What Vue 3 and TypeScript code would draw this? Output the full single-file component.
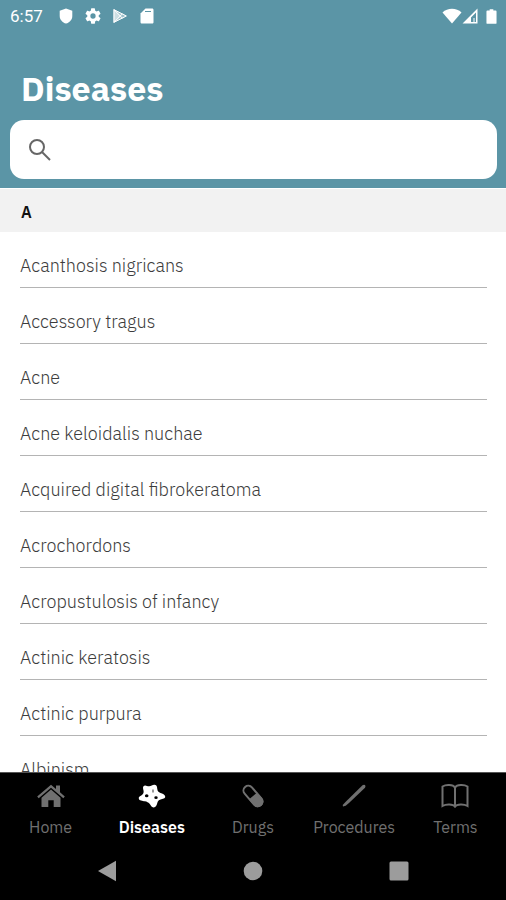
<script setup lang="ts">
import { ref } from 'vue'

type TabId = 'home' | 'diseases' | 'drugs' | 'procedures' | 'terms'

interface Tab {
  id: TabId
  label: string
}

const tabs: Tab[] = [
  { id: 'home', label: 'Home' },
  { id: 'diseases', label: 'Diseases' },
  { id: 'drugs', label: 'Drugs' },
  { id: 'procedures', label: 'Procedures' },
  { id: 'terms', label: 'Terms' },
]

const diseases: string[] = [
  'Acanthosis nigricans',
  'Accessory tragus',
  'Acne',
  'Acne keloidalis nuchae',
  'Acquired digital fibrokeratoma',
  'Acrochordons',
  'Acropustulosis of infancy',
  'Actinic keratosis',
  'Actinic purpura',
  'Albinism',
]

const activeTab = ref<TabId>('diseases')
const query = ref('')
</script>

<template>
  <div class="screen">
    <header class="header">
      <div class="status">
        <span class="clock">6:57</span>
        <svg class="status-icon" viewBox="0 0 16 16" aria-hidden="true">
          <path d="M8 .5 14.300 2.800V8c0 3.800-2.800 6.600-6.300 7.600C4.500 14.600 1.700 11.800 1.700 8V2.800z" />
        </svg>
        <svg class="status-icon gear" viewBox="2 2 20 20" aria-hidden="true">
          <path d="M19.140 12.940c.04-.3.060-.61.060-.94s-.02-.64-.07-.94l2.030-1.580a.49.49 0 0 0 .12-.61l-1.920-3.320a.49.49 0 0 0-.59-.22l-2.390.96a7 7 0 0 0-1.620-.94l-.36-2.540A.48.48 0 0 0 13.920 2.400h-3.840a.48.48 0 0 0-.47.41l-.36 2.540a7.400 7.400 0 0 0-1.620.94l-2.390-.96a.48.48 0 0 0-.59.22L2.740 8.870a.47.47 0 0 0 .12.61l2.030 1.580a6 6 0 0 0 0 1.880l-2.030 1.580a.49.49 0 0 0-.12.61l1.920 3.320c.12.22.37.29.59.22l2.390-.96c.5.38 1.030.7 1.620.94l.36 2.540c.05.24.24.41.48.41h3.840c.24 0 .44-.17.470-.41l.36-2.540a7 7 0 0 0 1.620-.94l2.390.96c.22.080.470 0 .59-.22l1.920-3.320a.47.47 0 0 0-.12-.61zM12 15.300a3.300 3.300 0 1 1 0-6.600 3.300 3.300 0 0 1 0 6.600z" />
        </svg>
        <svg class="status-icon" viewBox="0 0 16 16" aria-hidden="true">
          <path d="M1.500 1 15 8 1.500 15z" opacity=".4" />
          <path d="M1.500 1 9.500 8 1.500 15z" opacity=".5" />
          <path d="M2 1.700V14.300L14.300 8zL10.500 10.300M2 14.300 10.500 5.700" class="play-lines" />
        </svg>
        <svg class="status-icon" viewBox="0 0 16 16" aria-hidden="true">
          <path fill-rule="evenodd" d="M6.500.5h6.500c1 0 1.500.6 1.500 1.500v12c0 1-.5 1.500-1.500 1.500H3c-1 0-1.500-.5-1.500-1.500V5.500z" />
          <path d="M6 3.500H12" class="card-slot" />
        </svg>
        <span class="status-gap"></span>
        <svg class="wifi" viewBox="0 0 20 16" aria-hidden="true">
          <path d="M.5 4.500C5.500-.5 14.500-.5 19.500 4.500L10 15.500z" />
        </svg>
        <svg class="status-icon signal" viewBox="0 0 16 16" aria-hidden="true">
          <path fill-rule="evenodd" d="M15.500.5v15H.5zM14 4.500 9 9.500V14H14z" />
          <path d="M11 10h2v4h-2z" opacity=".5" />
        </svg>
        <svg class="battery" viewBox="0 0 12 18" aria-hidden="true">
          <path d="M4 1h4v1.500h2.500q1 0 1 1V16q0 1-1 1h-9q-1 0-1-1V3.500q0-1 1-1H4z" />
        </svg>
      </div>
      <h1 class="title">Diseases</h1>
      <label class="search">
        <svg class="search-icon" viewBox="0 0 24 24" aria-hidden="true">
          <circle cx="9" cy="9" r="7" />
          <path d="M14 14 22 22" />
        </svg>
        <input v-model="query" class="search-input" type="search" aria-label="Search diseases" />
      </label>
    </header>

    <main class="content">
      <h2 class="section">A</h2>
      <ul class="list">
        <li v-for="name in diseases" :key="name">
          <a class="row" href="#">{{ name }}</a>
        </li>
      </ul>
    </main>

    <nav class="tabs">
      <button
        v-for="tab in tabs"
        :key="tab.id"
        type="button"
        class="tab"
        :class="{ active: tab.id === activeTab }"
        @click="activeTab = tab.id"
      >
        <svg v-if="tab.id === 'home'" class="tab-icon" viewBox="0 0 28 24" aria-hidden="true">
          <path d="M14 5.500 23.500 13.700V22.500q0 .5-.5.5h-6.300v-6.700h-5.400V23H5q-.5 0-.5-.5v-8.800z" />
          <path d="M14 .8 19 5V1.500h4v6.800l4.800 4.100-1.500 1.800L14 3.700 1.700 14.200.2 12.400z" />
        </svg>
        <svg v-else-if="tab.id === 'diseases'" class="tab-icon" viewBox="0 0 28 24" aria-hidden="true">
          <path fill-rule="evenodd" d="M5.500 2.200C7 .4 9 2.200 11 2.300c2.200.1 3.600-1.800 5.600-1.500 2.400.3 2.500 2.400 2.700 4.200.2 2.200 1.200 3.200 3.200 4 2 .8 4.500 1.400 4.700 3.400.2 2.300-2.600 2.300-4.600 3-2 .8-2.800 1.600-3.300 3.600-.5 2.200-1.500 4.600-3.800 4.500-2 0-2.600-2.200-3.900-3.700-1.300-1.500-2.700-2.200-4.700-2.600-2.300-.5-5.800-.4-6.100-2.800-.3-2 2.200-2.600 3.400-3.700 1.500-1.400 1.600-2.400 1.300-4.300C5.300 5 4.500 3.500 5.500 2.200zM8.700 10.300a1.800 1.500 0 1 0 0 3 1.800 1.500 0 0 0 0-3zm9.300 2a1.700 1.400 0 1 0 0 2.800 1.700 1.400 0 0 0 0-2.800zM14.600 5.500v3h.8v-3z" />
        </svg>
        <svg v-else-if="tab.id === 'drugs'" class="tab-icon" viewBox="0 0 28 24" aria-hidden="true">
          <g transform="rotate(-41 14 12)">
            <rect x="9.200" y="0" width="9.600" height="24" rx="4.800" class="line" />
            <path d="M8.500 12h11v7.500a5.500 5.500 0 0 1-11 0z" />
          </g>
        </svg>
        <svg v-else-if="tab.id === 'procedures'" class="tab-icon" viewBox="0 0 28 24" aria-hidden="true">
          <path d="M22.500 1.300q1.300-1 2.500-.2 1 1.300 0 2.600L9.500 18.500 5.700 21.800 3 22.600 2.700 21 5.500 18z" />
        </svg>
        <svg v-else class="tab-icon" viewBox="0 0 28 24" aria-hidden="true">
          <path class="line" d="M14 3.500C12 .5 5 .3 1.500 2.500V22C5 20 12 20 14 22.500 16 20 23 20 26.500 22V2.500C23 .3 16 .5 14 3.500zV23.500" />
        </svg>
        <span>{{ tab.label }}</span>
      </button>
    </nav>

    <div class="system">
      <button type="button" class="system-button" aria-label="Back">
        <svg viewBox="0 0 20 22" aria-hidden="true"><path d="M1 11 19 .7V21.300z" /></svg>
      </button>
      <button type="button" class="system-button" aria-label="Home screen">
        <svg viewBox="0 0 20 22" aria-hidden="true"><circle cx="10" cy="11" r="9.300" /></svg>
      </button>
      <button type="button" class="system-button" aria-label="Recent apps">
        <svg viewBox="0 0 20 22" aria-hidden="true"><rect x=".5" y="1.500" width="19" height="19" rx="1.500" /></svg>
      </button>
    </div>
  </div>
</template>

<style>
body {
  margin: 0;
}
</style>

<style scoped>
.screen {
  display: flex;
  flex-direction: column;
  height: 100vh;
  background: #fff;
  color: #3c3c3c;
  font-family: 'IBM Plex Sans', 'Noto Sans', sans-serif;
}

.header {
  padding: 0 9px 9px 10px;
  background: #5b95a6;
  border-bottom: 1px solid #fff;
}

.status {
  display: flex;
  align-items: center;
  height: 32px;
  color: #fff;
}

.clock {
  width: 48px;
  font: 400 17px/32px Roboto, sans-serif;
}

.status svg {
  fill: #fff;
}

.status-icon {
  width: 16px;
  height: 16px;
  margin-right: 11px;
}

.status .play-lines {
  fill: none;
  stroke: #fff;
  stroke-width: 1;
}

.card-slot {
  stroke: #5b95a6;
  stroke-width: 1;
}

.status-gap {
  flex: 1;
}

.wifi {
  width: 20px;
  height: 16px;
}

.status .signal {
  margin-right: 8px;
}

.battery {
  width: 11px;
  height: 17px;
}

.title {
  margin: 32px 11px 8px;
  color: #fff;
  font-size: 34px;
  font-weight: 700;
  line-height: 48px;
}

.search {
  display: flex;
  align-items: center;
  gap: 12px;
  height: 59px;
  padding: 0 18px;
  border-radius: 14px;
  background: #fff;
}

.search-icon {
  width: 24px;
  height: 24px;
  fill: none;
  stroke: #666;
  stroke-width: 2;
}

.search-input {
  flex: 1;
  min-width: 0;
  border: 0;
  outline: 0;
  background: transparent;
  color: #333;
  font: inherit;
  font-size: 16px;
}

.content {
  flex: 1;
  min-height: 0;
  overflow: hidden;
}

.section {
  margin: 0;
  padding: 3px 21px 0;
  background: #f2f2f2;
  color: #111;
  font-size: 16px;
  font-weight: 600;
  line-height: 40px;
}

.list {
  margin: 0;
  padding: 0 19px 0 20px;
  list-style: none;
}

.row {
  display: block;
  box-sizing: border-box;
  height: 56px;
  padding-top: 22px;
  border-bottom: 1px solid #b4b4b4;
  color: inherit;
  font-size: 18px;
  font-weight: 300;
  line-height: 24px;
  text-decoration: none;
}

.tabs {
  display: grid;
  grid-template-columns: repeat(5, 1fr);
  height: 70px;
  border-top: 1px solid #555;
  background: #000;
}

.tab {
  display: flex;
  flex-direction: column;
  align-items: center;
  gap: 7px;
  min-width: 0;
  padding: 11px 0 0;
  border: 0;
  background: none;
  color: #707070;
  font-family: inherit;
  font-size: 16px;
  font-weight: 400;
  line-height: 24px;
}

.tab.active {
  color: #fff;
  font-weight: 600;
}

.tab-icon {
  flex: none;
  width: 28px;
  height: 24px;
  fill: currentColor;
}

.line {
  fill: none;
  stroke: currentColor;
  stroke-width: 2;
}

.system {
  display: flex;
  justify-content: space-around;
  height: 57px;
  padding: 0 34px;
  background: #000;
}

.system-button {
  display: flex;
  justify-content: center;
  width: 48px;
  padding: 17px 0 0;
  border: 0;
  background: none;
}

.system-button svg {
  width: 20px;
  height: 22px;
  fill: #9c9c9c;
}
</style>
